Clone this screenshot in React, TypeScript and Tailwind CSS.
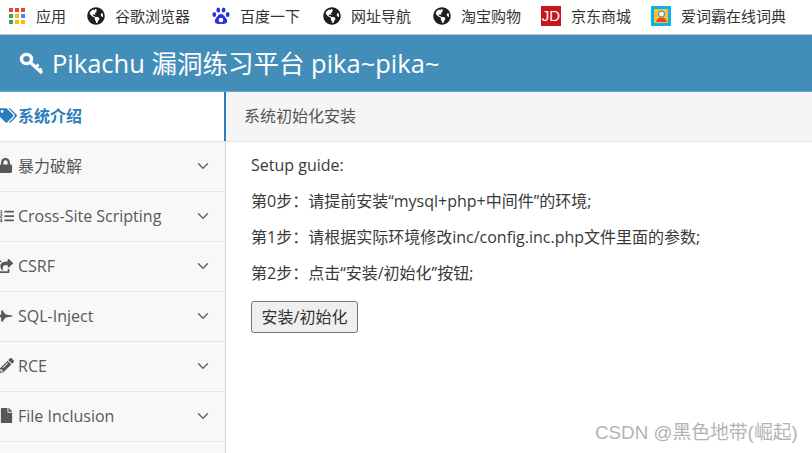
import React from "react";
import { FaGlobeAmericas, FaTags, FaLock, FaListOl, FaShareSquare, FaFighterJet, FaPencilAlt, FaFile } from "react-icons/fa";
import { LuChevronDown } from "react-icons/lu";

const font = "[font-family:'Open_Sans','Noto_Sans_CJK_SC',sans-serif]";

function Apps() {
  const colors = ["#ea4335", "#ea4335", "#ea4335", "#34a853", "#fbbc05", "#4285f4", "#34a853", "#fbbc05", "#fbbc05"];
  return (
    <div className="grid grid-cols-3 gap-[2px] w-[16px]">
      {colors.map((c, i) => (
        <span key={i} className="w-[4px] h-[4px]" style={{ backgroundColor: c }} />
      ))}
    </div>
  );
}

function Paw() {
  return (
    <svg width="18" height="18" viewBox="0 0 18 18" fill="#2932e1">
      <ellipse cx="6.3" cy="3" rx="1.9" ry="2.6" />
      <ellipse cx="11.6" cy="3" rx="1.9" ry="2.6" />
      <ellipse cx="2.3" cy="7.5" rx="1.9" ry="2.5" />
      <ellipse cx="15.7" cy="7.5" rx="1.9" ry="2.5" />
      <path d="M9 7c2 0 3 1.600 4.300 3.200 1.500 1.500 2.200 3 1.700 4.700-.6 1.800-2.800 2.300-6 1.800-3.200.5-5.400 0-6-1.800-.5-1.700.2-3.200 1.700-4.700C6 8.600 7 7 9 7z" />
      <circle cx="9" cy="13" r="2.300" fill="#fff" />
    </svg>
  );
}

function Jd() {
  return (
    <div className="w-[20px] h-[20px] bg-[#c9151e] text-white text-[15px] leading-[20px] text-center font-['Liberation_Sans',sans-serif]">JD</div>
  );
}

function Iciba() {
  return (
    <svg width="20" height="20" viewBox="0 0 20 20">
      <rect width="20" height="20" fill="#12b0ea" />
      <rect x="3" y="3" width="14" height="14" rx="1" fill="#f7c325" />
      <circle cx="10.500" cy="8" r="3" fill="#fff" stroke="#2a7fd0" strokeWidth="1" />
      <path d="M5 16c1-3.500 3-4.500 5.500-4.500S15 12.500 16 16z" fill="#e8452c" />
    </svg>
  );
}

function Globe() {
  return <FaGlobeAmericas className="text-[18px] text-[#1f1f1f]" />;
}

function Key() {
  return (
    <svg width="24" height="24" viewBox="0 0 24 24" fill="none" stroke="#fff" className="shrink-0">
      <ellipse cx="7.500" cy="8" rx="5" ry="4.600" strokeWidth="3.400" />
      <path d="M11.500 11.500 23 22" strokeWidth="3.200" />
      <path d="M16.500 16.500l3-3M20 20l2.500-2.500" strokeWidth="2.800" />
    </svg>
  );
}

const bookmarks: { icon: React.ReactNode; label: string; w: string; slot: string }[] = [
  { icon: <Apps />, label: "应用", w: "w-[80px]", slot: "w-[19px]" },
  { icon: <Globe />, label: "谷歌浏览器", w: "w-[125px]", slot: "w-[18px]" },
  { icon: <Paw />, label: "百度一下", w: "w-[110px]", slot: "w-[18px]" },
  { icon: <Globe />, label: "网址导航", w: "w-[110px]", slot: "w-[19px]" },
  { icon: <Globe />, label: "淘宝购物", w: "w-[109px]", slot: "w-[19px]" },
  { icon: <Jd />, label: "京东商城", w: "w-[110px]", slot: "w-[20px]" },
  { icon: <Iciba />, label: "爱词霸在线词典", w: "w-[150px]", slot: "w-[20px]" },
];

const nav: { icon: React.ReactNode; label: string }[] = [
  { icon: <FaLock className="text-[15px] -ml-[2px]" />, label: "暴力破解" },
  { icon: <FaListOl className="text-[14px]" />, label: "Cross-Site Scripting" },
  { icon: <FaShareSquare className="text-[16px] -ml-[3px]" />, label: "CSRF" },
  { icon: <FaFighterJet className="text-[16px] -ml-[3px]" />, label: "SQL-Inject" },
  { icon: <FaPencilAlt className="text-[15px] -ml-[1px]" />, label: "RCE" },
  { icon: <FaFile className="text-[15px] -ml-[1px]" />, label: "File Inclusion" },
];

export default function App() {
  return (
    <div className={`relative w-[812px] h-[453px] overflow-hidden bg-white flex flex-col ${font}`}>
      <div className="h-[35px] shrink-0 bg-white border-b border-[#c4c7ca] flex items-center pl-[7px] pb-[2px]">
        {bookmarks.map((b) => (
          <div key={b.label} className={`${b.w} shrink-0 flex items-center gap-[10px] text-[15px] text-[#333]`}>
            <div className={`${b.slot} flex justify-center shrink-0`}>{b.icon}</div>
            <span className="whitespace-nowrap">{b.label}</span>
          </div>
        ))}
      </div>
      <div className="h-[57px] shrink-0 bg-[#438eb9] border-b border-[#6ea9cc] flex items-center pl-[19px] gap-[9px] text-white text-[25.5px]">
        <Key />
        <span className="whitespace-nowrap">Pikachu 漏洞练习平台 pika~pika~</span>
      </div>
      <div className="flex flex-1 min-h-0">
        <div className="w-[226px] shrink-0 bg-[#f8f8f8] border-r border-[#d4d4d4] flex flex-col">
          <div className="h-[50px] shrink-0 bg-white border-b border-[#e5e5e5] flex items-center gap-[1px] font-bold text-[16px] leading-[22px] text-[#2b7dbc] relative pb-[2px]">
            <FaTags className="text-[17px] -ml-[1px] w-[18px]" />
            <span>系统介绍</span>
            <div className="absolute right-[-1px] top-0 bottom-0 w-[2px] bg-[#2b7dbc]" />
          </div>
          {nav.map((n) => (
            <div key={n.label} className="h-[50px] shrink-0 border-b border-[#e5e5e5] flex items-center text-[16px] leading-[22px] text-[#585858] pb-[2px]">
              <div className="w-[18px] shrink-0 flex overflow-hidden">{n.icon}</div>
              <span className="flex-1 whitespace-nowrap">{n.label}</span>
              <LuChevronDown className="text-[18px] mr-[13px] text-[#666]" />
            </div>
          ))}
        </div>
        <div className="flex-1 min-w-0 flex flex-col">
          <div className="h-[50px] shrink-0 bg-[#f5f5f5] border-b border-[#e5e5e5] flex items-center pl-[18px] text-[16px] text-[#555] pb-[2px]">
            系统初始化安装
          </div>
          <div className="pl-[25px] pt-[13px] text-[16px] text-[#393939] flex flex-col gap-[16px] items-start leading-[20px]">
            <p>Setup guide:</p>
            <p>第0步：请提前安装“mysql+php+中间件”的环境;</p>
            <p>第1步：请根据实际环境修改inc/config.inc.php文件里面的参数;</p>
            <p>第2步：点击“安装/初始化”按钮;</p>
            <button className="mt-[2px] w-[107px] h-[32px] bg-[#efefef] border border-[#767676] rounded-[3px] text-[16px] text-[#333]">
              安装/初始化
            </button>
          </div>
        </div>
      </div>
      <div className="absolute left-[595px] top-[421px] text-[18.8px] leading-[24px] text-[#b3b3b3] whitespace-nowrap font-['Liberation_Sans','Noto_Sans_CJK_SC',sans-serif]">
        CSDN @黑色地带(崛起)
      </div>
    </div>
  );
}
